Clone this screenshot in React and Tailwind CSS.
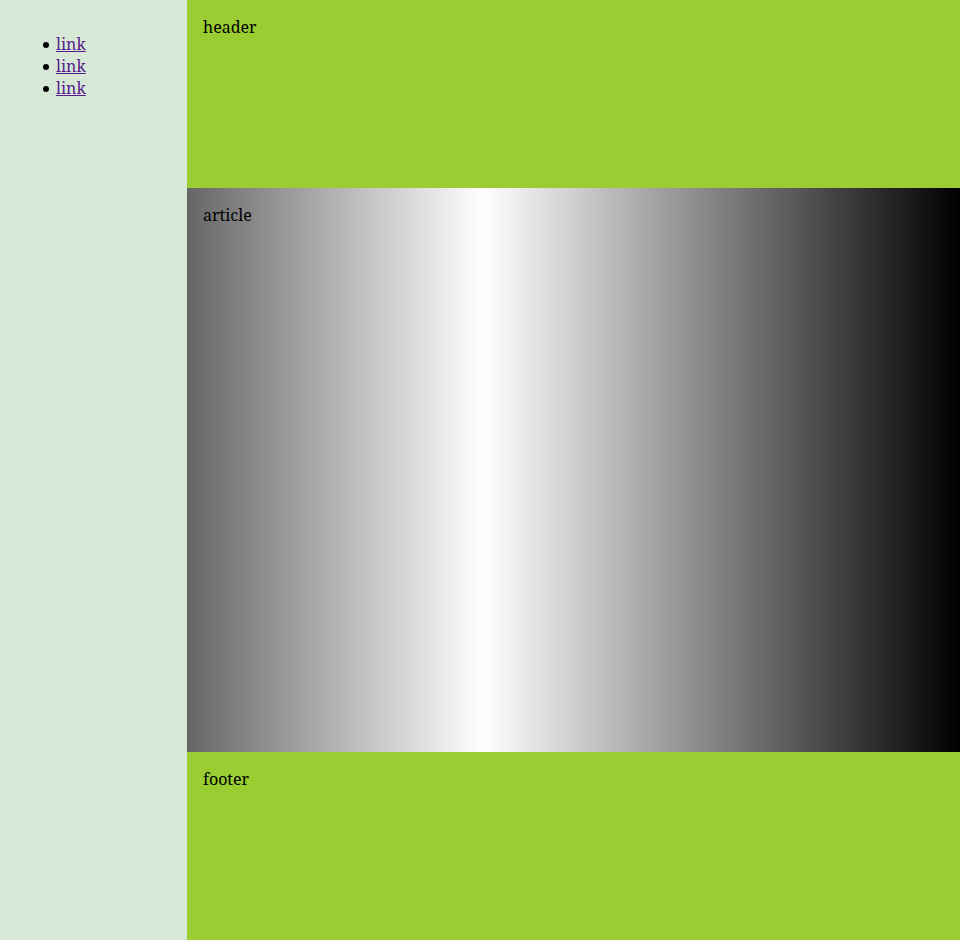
export default function App() {
    const links = ["link", "link", "link"];

    return (
        <div className="flex h-[940px] w-[960px] font-['Noto_Serif','DejaVu_Serif',serif] text-base leading-[normal] text-black">
            {/* sidebar nav */}
            <nav className="w-[187px] shrink-0 bg-[#d8e8d6] p-4">
                <ul className="mt-[17px] pl-[27px]">
                    {links.map((label, i) => (
                        <li key={i} className="flex items-center">
                            <span className="mr-[7px] mt-[2px] size-[6px] rounded-full bg-black" />
                            <a href="#" className="text-[#551a8b] underline">{label}</a>
                        </li>
                    ))}
                </ul>
            </nav>

            <div className="flex flex-1 flex-col">
                <header className="h-[188px] bg-[#9acd32] p-4">header</header>
                <article className="h-[564px] bg-[linear-gradient(to_right,#666666,#ffffff_38.3%,#000000)] p-4">
                    article
                </article>
                <footer className="flex-1 bg-[#9acd32] p-4">footer</footer>
            </div>
        </div>
    );
}
